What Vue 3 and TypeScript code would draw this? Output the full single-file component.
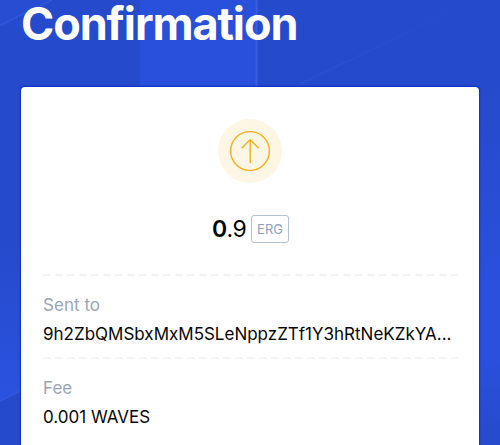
<script setup lang="ts">
interface Detail {
  label: string
  value: string
}

const amount = { whole: '0', fraction: '.9', asset: 'ERG' }

const details: Detail[] = [
  { label: 'Sent to', value: '9h2ZbQMSbxMxM5SLeNppzZTf1Y3hRtNeKZkYA...' },
  { label: 'Fee', value: '0.001 WAVES' },
]
</script>

<template>
  <main class="screen">
    <svg class="backdrop" viewBox="0 0 500 445" aria-hidden="true">
      <defs>
        <linearGradient id="left" x1="0" y1="0" x2="0" y2="1">
          <stop offset="0" stop-color="#264acc" />
          <stop offset="0.55" stop-color="#264acc" />
          <stop offset="0.88" stop-color="#2a52de" />
        </linearGradient>
        <linearGradient id="right" x1="0" y1="0" x2="0" y2="1">
          <stop offset="0.2" stop-color="#264acc" />
          <stop offset="0.65" stop-color="#2a50dc" />
          <stop offset="0.8" stop-color="#2a50dc" />
          <stop offset="1" stop-color="#264acc" />
        </linearGradient>
        <linearGradient id="ray" x1="0" y1="1" x2="1" y2="0">
          <stop offset="0" stop-color="#2a4fd6" />
          <stop offset="1" stop-color="#264acc" />
        </linearGradient>
      </defs>
      <rect width="500" height="445" fill="#264acc" />
      <rect width="140" height="445" fill="url(#left)" />
      <rect x="257" width="243" height="445" fill="url(#right)" />
      <rect x="140" width="117" height="100" fill="#2950db" />
      <rect x="255.5" width="2" height="100" fill="#365ee5" />
      <path d="M0 0H52L0 25Z" fill="#284dd3" />
      <path d="M0 25.500L52 0" stroke="#2f57df" stroke-width="1.500" />
      <path d="M300 84L475 0" stroke="url(#ray)" stroke-width="1.500" />
      <path d="M0 401L30 386V445H0Z" fill="#264acc" />
      <path d="M0 401L30 386" stroke="#3159e2" stroke-width="1.500" />
    </svg>

    <h1 class="title">Confirmation</h1>

    <section class="card">
      <svg class="status" viewBox="0 0 64 64" fill="none" aria-hidden="true">
        <circle cx="32" cy="32" r="32" fill="#fdf6e4" />
        <g stroke="#f6ae1c" stroke-width="1.400">
          <circle cx="32" cy="32" r="19.400" />
          <path d="M32.200 44V21M23.700 29.300L32.200 20.800L40.700 29.300" />
        </g>
      </svg>

      <div class="amount">
        <span class="figure"><b>{{ amount.whole }}</b>{{ amount.fraction }}</span>
        <span class="asset">{{ amount.asset }}</span>
      </div>

      <dl class="details">
        <div v-for="item in details" :key="item.label" class="detail">
          <svg class="divider" viewBox="0 0 415 2" aria-hidden="true">
            <path d="M0 1H415" stroke="#f0f1f3" stroke-width="1.500" stroke-dasharray="8 4" />
          </svg>
          <dt>{{ item.label }}</dt>
          <dd>{{ item.value }}</dd>
        </div>
      </dl>
    </section>
  </main>
</template>

<style>
body {
  margin: 0;
  overflow: hidden;
}
</style>

<style scoped>
.screen {
  position: relative;
  box-sizing: border-box;
  width: 500px;
  height: 445px;
  padding: 0 21px;
  overflow: hidden;
  font-family: Inter, "Liberation Sans", sans-serif;
}

.backdrop {
  position: absolute;
  inset: 0;
  width: 500px;
  height: 445px;
}

.title {
  position: relative;
  height: 87px;
  margin: 0;
  color: #fff;
  font-size: 45px;
  font-weight: 700;
  line-height: 47px;
  letter-spacing: -1.1px;
}

.card {
  position: relative;
  box-sizing: border-box;
  display: flex;
  flex-direction: column;
  align-items: center;
  height: 400px;
  padding: 32px 22px 0;
  border-radius: 4px;
  background: #fff;
  box-shadow: 0 0 1.5px 0.5px #0b2fc4;
}

.status {
  flex: none;
  width: 64px;
  height: 64px;
}

.amount {
  display: flex;
  align-items: center;
  gap: 5px;
  height: 28px;
  margin-top: 32px;
  padding-left: 1px;
  color: #050505;
}

.figure {
  font-size: 23px;
  font-weight: 400;
  line-height: 30px;
  letter-spacing: -0.6px;
}

.figure b {
  font-weight: 600;
}

.asset {
  box-sizing: border-box;
  width: 38px;
  height: 28px;
  border: 1px solid #b4c0d6;
  border-radius: 3px;
  color: #8da0c4;
  font-size: 13px;
  line-height: 27px;
  text-align: center;
}

.details {
  align-self: flex-start;
  width: 415px;
  margin: 31px 0 0;
}

.detail {
  display: flex;
  flex-direction: column;
  height: 82.5px;
}

.divider {
  flex: none;
  width: 415px;
  height: 2px;
}

dt {
  margin-top: 17.4px;
  color: #9aa5b5;
  font-size: 17px;
  font-weight: 400;
  line-height: 24px;
  letter-spacing: 0.04px;
}

dd {
  margin: 5.1px 0 0;
  color: #080808;
  font-size: 17px;
  font-weight: 400;
  line-height: 24px;
  white-space: nowrap;
}
</style>
